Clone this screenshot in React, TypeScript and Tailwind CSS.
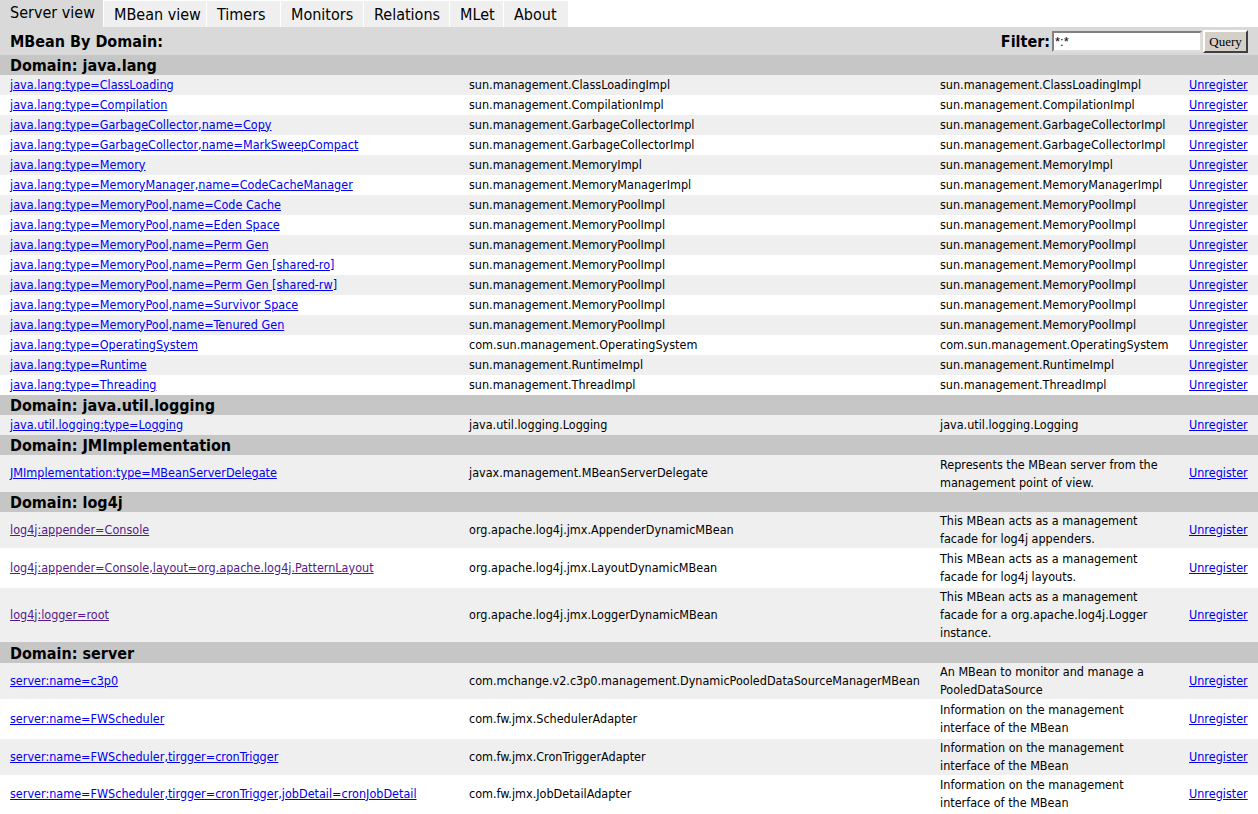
import React from "react";

type Row = {
  name: string;
  cls: string;
  desc: string[];
  h: number;
  visited?: boolean;
};

type Domain = { title: string; h: number; rows: Row[] };

const TABS: [string, string][] = [
  ["Server view", "w-[103px]"],
  ["MBean view", "w-[102px]"],
  ["Timers", "w-[73px]"],
  ["Monitors", "w-[82px]"],
  ["Relations", "w-[85px]"],
  ["MLet", "w-[53px]"],
  ["About", "w-[64px]"],
];

const one = (name: string, cls: string, desc?: string): Row => ({ name, cls, desc: [desc ?? cls], h: 20 });

const DOMAINS: Domain[] = [
  {
    title: "java.lang",
    h: 20,
    rows: [
      one("java.lang:type=ClassLoading", "sun.management.ClassLoadingImpl"),
      one("java.lang:type=Compilation", "sun.management.CompilationImpl"),
      one("java.lang:type=GarbageCollector,name=Copy", "sun.management.GarbageCollectorImpl"),
      one("java.lang:type=GarbageCollector,name=MarkSweepCompact", "sun.management.GarbageCollectorImpl"),
      one("java.lang:type=Memory", "sun.management.MemoryImpl"),
      one("java.lang:type=MemoryManager,name=CodeCacheManager", "sun.management.MemoryManagerImpl"),
      one("java.lang:type=MemoryPool,name=Code Cache", "sun.management.MemoryPoolImpl"),
      one("java.lang:type=MemoryPool,name=Eden Space", "sun.management.MemoryPoolImpl"),
      one("java.lang:type=MemoryPool,name=Perm Gen", "sun.management.MemoryPoolImpl"),
      one("java.lang:type=MemoryPool,name=Perm Gen [shared-ro]", "sun.management.MemoryPoolImpl"),
      one("java.lang:type=MemoryPool,name=Perm Gen [shared-rw]", "sun.management.MemoryPoolImpl"),
      one("java.lang:type=MemoryPool,name=Survivor Space", "sun.management.MemoryPoolImpl"),
      one("java.lang:type=MemoryPool,name=Tenured Gen", "sun.management.MemoryPoolImpl"),
      one("java.lang:type=OperatingSystem", "com.sun.management.OperatingSystem"),
      one("java.lang:type=Runtime", "sun.management.RuntimeImpl"),
      one("java.lang:type=Threading", "sun.management.ThreadImpl"),
    ],
  },
  {
    title: "java.util.logging",
    h: 20,
    rows: [one("java.util.logging:type=Logging", "java.util.logging.Logging")],
  },
  {
    title: "JMImplementation",
    h: 20,
    rows: [
      {
        name: "JMImplementation:type=MBeanServerDelegate",
        cls: "javax.management.MBeanServerDelegate",
        desc: ["Represents the MBean server from the", "management point of view."],
        h: 37,
      },
    ],
  },
  {
    title: "log4j",
    h: 20,
    rows: [
      {
        name: "log4j:appender=Console",
        cls: "org.apache.log4j.jmx.AppenderDynamicMBean",
        desc: ["This MBean acts as a management", "facade for log4j appenders."],
        h: 36,
        visited: true,
      },
      {
        name: "log4j:appender=Console,layout=org.apache.log4j.PatternLayout",
        cls: "org.apache.log4j.jmx.LayoutDynamicMBean",
        desc: ["This MBean acts as a management", "facade for log4j layouts."],
        h: 40,
        visited: true,
      },
      {
        name: "log4j:logger=root",
        cls: "org.apache.log4j.jmx.LoggerDynamicMBean",
        desc: ["This MBean acts as a management", "facade for a org.apache.log4j.Logger", "instance."],
        h: 54,
        visited: true,
      },
    ],
  },
  {
    title: "server",
    h: 21,
    rows: [
      {
        name: "server:name=c3p0",
        cls: "com.mchange.v2.c3p0.management.DynamicPooledDataSourceManagerMBean",
        desc: ["An MBean to monitor and manage a", "PooledDataSource"],
        h: 36,
      },
      {
        name: "server:name=FWScheduler",
        cls: "com.fw.jmx.SchedulerAdapter",
        desc: ["Information on the management", "interface of the MBean"],
        h: 40,
      },
      {
        name: "server:name=FWScheduler,tirgger=cronTrigger",
        cls: "com.fw.jmx.CronTriggerAdapter",
        desc: ["Information on the management", "interface of the MBean"],
        h: 36,
      },
      {
        name: "server:name=FWScheduler,tirgger=cronTrigger,jobDetail=cronJobDetail",
        cls: "com.fw.jmx.JobDetailAdapter",
        desc: ["Information on the management", "interface of the MBean"],
        h: 38,
      },
    ],
  },
];

const font = "font-['Tahoma','DejaVu_Sans_Condensed','DejaVu_Sans',sans-serif]";

export default function App() {
  return (
    <div className={`w-[1258px] bg-white text-black ${font}`}>
      {/* Tabs */}
      <div className="flex h-[27px] items-end">
        {TABS.map(([t, w], i) => (
          <div
            key={t}
            className={`${w} whitespace-nowrap pl-[10px] text-[16px] leading-[24px] ${
              i === 0 ? "h-[27px] bg-[#d9d9d9] pt-px" : "ml-px h-[26px] bg-[#efefef] pt-[2px]"
            }`}
          >
            {t}
          </div>
        ))}
      </div>

      {/* Title bar with filter */}
      <div className="flex h-[28px] items-center justify-between bg-[#d9d9d9] pl-[10px] pr-[10px]">
        <span className="pt-[2px] text-[16px] font-bold">MBean By Domain:</span>
        <div className="flex items-center">
          <span className="mr-[2px] pt-[2px] text-[16px] font-bold">Filter:</span>
          <input
            readOnly
            value="*:*"
            className="h-[21px] w-[150px] border-2 border-t-[#808080] border-l-[#808080] border-r-[#e0ded8] border-b-[#e0ded8] bg-white px-[1px] font-['Liberation_Sans',sans-serif] text-[13px] leading-[17px] outline-none"
          />
          <button className="ml-px h-[23px] w-[45px] border-2 border-t-white border-l-white border-r-[#404040] border-b-[#404040] bg-[#d4d0c8] font-['Liberation_Serif',serif] text-[13px] leading-none">
            Query
          </button>
        </div>
      </div>

      <table className="w-[1258px] table-fixed border-collapse text-[12.5px]">
        <colgroup>
          <col className="w-[459px]" />
          <col className="w-[471px]" />
          <col className="w-[249px]" />
          <col className="w-[79px]" />
        </colgroup>
        <tbody>
          {DOMAINS.map((d) => (
            <React.Fragment key={d.title}>
              <tr className="bg-[#c6c6c6]" style={{ height: d.h }}>
                <td colSpan={4} className="pl-[10px] pt-px text-[16px] font-bold leading-[19px]">
                  Domain: {d.title}
                </td>
              </tr>
              {d.rows.map((r, i) => (
                <tr key={r.name} className={i % 2 === 0 ? "bg-[#efefef]" : "bg-white"} style={{ height: r.h }}>
                  <td className="whitespace-nowrap pl-[10px] align-middle">
                    <a href="#" className={`underline ${r.visited ? "text-[#551a8b]" : "text-[#0000ee]"}`}>
                      {r.name}
                    </a>
                  </td>
                  <td className="whitespace-nowrap pl-[10px] align-middle">{r.cls}</td>
                  <td className="whitespace-nowrap pl-[10px] align-middle leading-[18px]">
                    {r.desc.map((l) => (
                      <div key={l}>{l}</div>
                    ))}
                  </td>
                  <td className="pl-[10px] align-middle">
                    <a href="#" className="text-[#0000ee] underline">
                      Unregister
                    </a>
                  </td>
                </tr>
              ))}
            </React.Fragment>
          ))}
        </tbody>
      </table>
    </div>
  );
}
